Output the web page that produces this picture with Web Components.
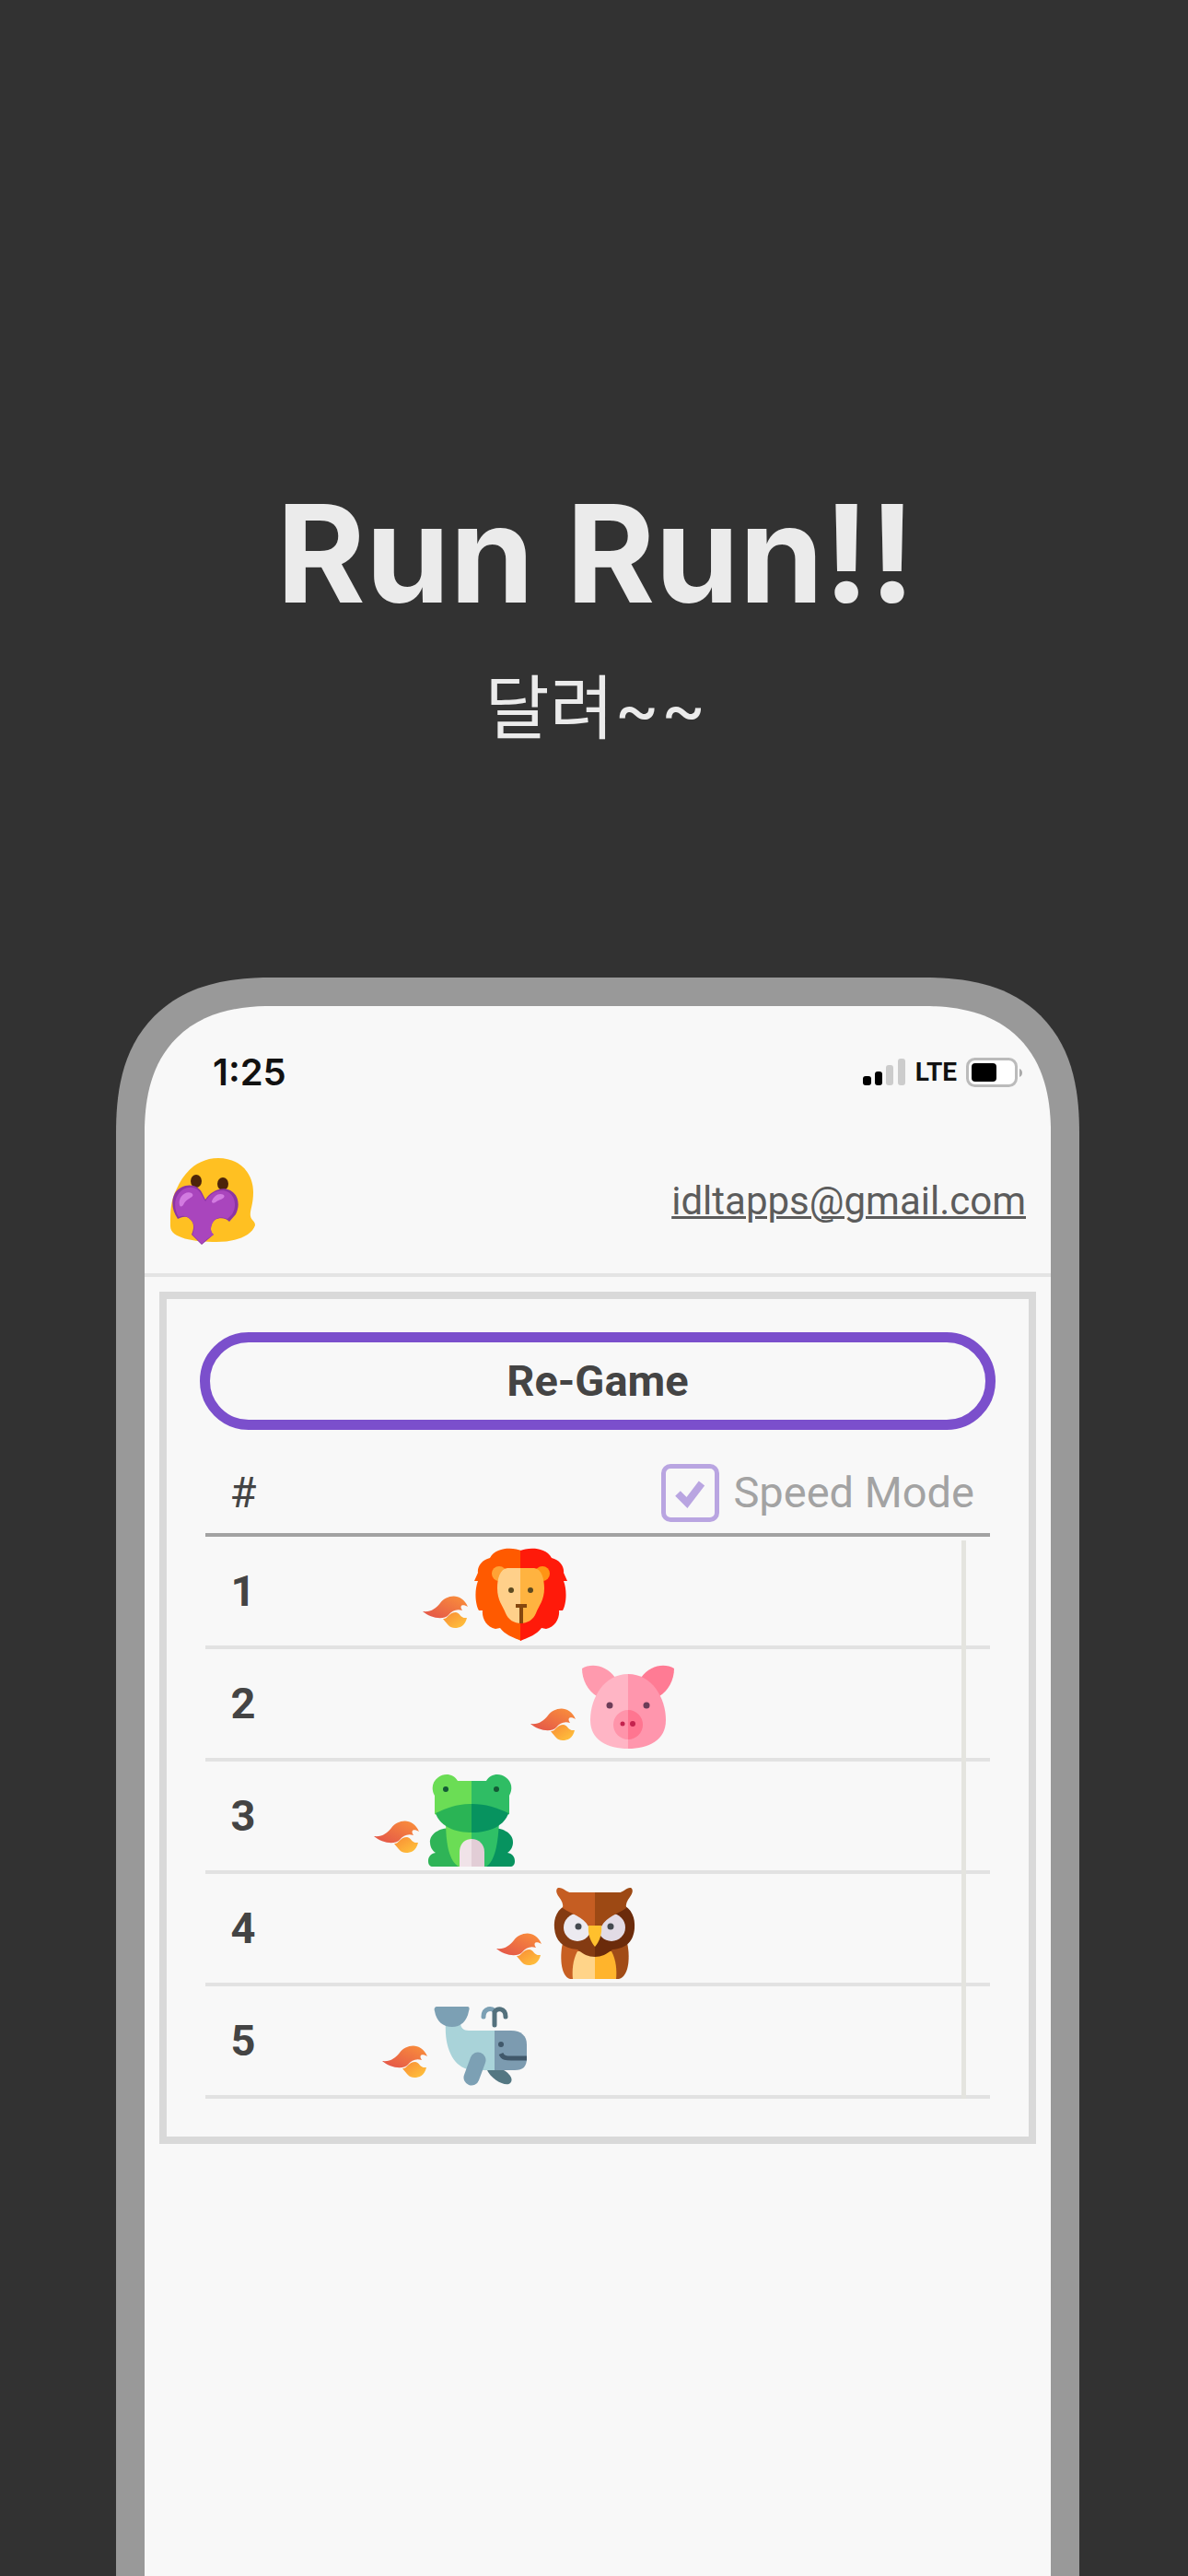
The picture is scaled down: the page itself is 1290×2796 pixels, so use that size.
<!DOCTYPE html>
<html lang="ko">
<head>
<meta charset="utf-8">
<meta name="viewport" content="width=device-width, initial-scale=1">
<title>Run Run!!</title>
<style>
  html { height: 100%; }
  body { margin: 0; min-height: 100%; display: flex; flex-direction: column; background: #323232; }
  promo-page { flex: 1; }
</style>
</head>
<body>
<promo-page>
  <promo-headline slot="headline">
    <span slot="title">Run Run!!</span>
    <span slot="subtitle">달려~~</span>
  </promo-headline>
  <phone-frame>
    <status-bar time="1:25" network="LTE"></status-bar>
    <app-header email="idltapps@gmail.com"></app-header>
    <race-board>
      <race-button slot="action">Re-Game</race-button>
    </race-board>
  </phone-frame>
</promo-page>

<script>
const define = (name, render) => customElements.define(name, class extends HTMLElement {
  constructor() {
    super();
    this.attachShadow({ mode: 'open' });
  }
  connectedCallback() {
    this.shadowRoot.innerHTML = render(this);
  }
});

const ANIMALS = {
  lion: `
    <g fill="#ff5a00"><path d="M51 2C44-1 24-3 17 10C8 12 3 20 4 26L0 35L4 35C0 45 1 60 5 67L9 67C8 75 13 85 23 87L28 86C34 94 44 97 51 100Z"/></g>
    <path fill="#ff1a0a" d="M50 2C57-1 77-3 84 10C93 12 98 20 97 26L101 35L97 35C101 45 100 60 96 67L92 67C93 75 88 85 78 87L73 86C67 94 57 97 50 100Z"/>
    <circle cx="27" cy="27" r="8" fill="#ffa335"/><circle cx="74" cy="27" r="8" fill="#ff9414"/>
    <path fill="#ffd08a" d="M51 21H36C28 22 25 32 25 43C25 56 31 62 34 70C37 77 43 81 51 81Z"/>
    <path fill="#ffb340" d="M50 21H65C73 22 76 32 76 43C76 56 70 62 67 70C64 77 58 81 50 81Z"/>
    <g fill="#5d4a20"><circle cx="40" cy="45" r="3"/><circle cx="61" cy="45" r="3"/></g>
    <path d="M45 62H57M51 63V81" fill="none" stroke="#85470f" stroke-width="4"/>`,
  pig: `
    <path fill="#ff9aae" d="M0 8C10 2 26 4 36 18L16 38C6 32 0 20 0 8Z"/>
    <path fill="#ff7b94" d="M100 8C90 2 74 4 64 18L84 38C94 32 100 20 100 8Z"/>
    <path fill="#ffb5c5" d="M50 14C24 14 9 40 9 64C9 86 28 95 50 95Z"/>
    <path fill="#ff96ad" d="M50 14C76 14 91 40 91 64C91 86 72 95 50 95Z"/>
    <path fill="#ff94aa" d="M50 53A16 16 0 0 0 50 85Z"/><path fill="#ff7590" d="M50 53A16 16 0 0 1 50 85Z"/>
    <g fill="#6c3d58"><circle cx="30" cy="48" r="3.5"/><circle cx="70" cy="48" r="3.5"/></g>
    <g fill="#c4234e"><circle cx="44" cy="68" r="2.5"/><circle cx="55" cy="68" r="3"/></g>`,
  frog: `
    <path fill="#2fb457" d="M30 60C16 57 4 66 5 75C5 80 8 84 11 86C5 87 3 91 3 95C3 99 5 101 8 101H38V70Z"/>
    <path fill="#07935f" d="M70 60C84 57 96 66 95 75C95 80 92 84 89 86C95 87 97 91 97 95C97 99 95 101 92 101H62V70Z"/>
    <path fill="#6bdd55" d="M50 50H22C22 78 26 95 36 101H50Z"/><path fill="#2fc066" d="M50 50H80C79 78 75 95 66 101H50Z"/>
    <path fill="#6bdd55" d="M50 8H35C31 0 20-1 14 4C7 9 6 17 10 24V44L50 60Z"/>
    <path fill="#2fbd64" d="M50 8H66C70 0 81-1 87 4C94 9 95 17 91 24V44L50 60Z"/>
    <path fill="#2ab455" d="M11 43C24 37 34 33 50 33V64C30 64 15 56 11 43Z"/>
    <path fill="#07935f" d="M90 43C77 37 66 33 50 33V64C71 64 86 56 90 43Z"/>
    <path fill="#f0e3e8" d="M50 71C42 71 37 77 37 85V101H50Z"/><path fill="#e2cdd6" d="M50 71C58 71 64 77 64 85V101H50Z"/>
    <g fill="#135a35"><circle cx="22" cy="17" r="3"/><circle cx="77" cy="17" r="3"/></g>`,
  owl: `
    <path fill="#c75f22" d="M51 62H16C13 74 13 98 24 101H51Z"/><path fill="#a14c17" d="M51 62H86C89 74 89 98 77 101H51Z"/>
    <path fill="#ffd489" d="M51 71H32C27 80 26 92 27 101H51Z"/><path fill="#ffb42c" d="M51 71H69C74 80 75 92 74 101H51Z"/>
    <path fill="#843b12" d="M51 20H22C10 24 6 35 7 46C8 59 16 68 32 69C38 74 44 77 51 77Z"/>
    <path fill="#6b2b0b" d="M51 20H80C91 24 95 35 94 46C93 59 86 68 70 69C64 74 58 77 51 77Z"/>
    <circle cx="32" cy="45" r="15" fill="#eceaf0"/><circle cx="69" cy="45" r="15" fill="#e2dbe5"/>
    <path fill="#c55d22" d="M51 7H25C20 7 16 1 11 2C8 4 9 8 12 12C15 16 17 20 16 24C26 31 38 33 44 44L51 45Z"/>
    <path fill="#9d4914" d="M51 7H77C82 7 86 1 90 2C93 4 92 8 89 12C86 16 84 20 85 24C75 31 64 33 58 44L51 45Z"/>
    <path fill="#ffc02d" d="M44 43H58C59 52 56 60 51 66C46 60 43 52 44 43Z"/>
    <g fill="#444a50"><circle cx="33" cy="44" r="3.5"/><circle cx="68" cy="44" r="3.5"/></g>`,
  whale: `
    <path fill="#547782" d="M57 76H72C80 79 88 87 83 92C79 96 63 90 57 76Z"/>
    <path fill="#a9d3d9" d="M13 26H29C29 32 32 35 38 35H68V78H44C24 78 11 58 13 26Z"/>
    <path fill="#7c9bb0" d="M66 35H84C95 35 101 41 101 50V65C101 74 97 78 88 78H66Z"/>
    <path fill="#7ca0b4" d="M4 9H36C39 9 39 11 38 14C36 25 29 31 20 31C10 31 3 25 1 14C0 11 1 9 4 9Z"/>
    <path fill="none" stroke="#7ca0b4" stroke-width="17" stroke-linecap="round" d="M48 67L41 86"/>
    <path fill="none" stroke="#7ca0b4" stroke-width="5" stroke-linecap="round" d="M54 20C54 10 64 10 66 14"/>
    <path fill="none" stroke="#54717d" stroke-width="5" stroke-linecap="round" d="M66 29V15C68 10 78 10 78 20"/>
    <circle cx="73" cy="50" r="3" fill="#40586a"/>
    <path fill="none" stroke="#40586a" stroke-width="5" d="M73 60C75 65 79 65 84 65H101"/>`
};

const RUNNERS = [
  { animal: 'lion', run: 200 },
  { animal: 'pig', run: 352 },
  { animal: 'frog', run: 131 },
  { animal: 'owl', run: 304 },
  { animal: 'whale', run: 143 }
];

define('promo-page', () => `
  <style>
    :host { display: flex; flex-direction: column; font-family: Roboto, "Noto Sans CJK KR", sans-serif; color: #444; }
    main { flex: 1; display: flex; flex-direction: column; padding: 0 118px 0 126px; }
  </style>
  <slot name="headline"></slot>
  <main><slot></slot></main>`);

define('promo-headline', () => `
  <style>
    :host { display: block; padding: 505px 118px 230px 122px; text-align: center; color: #ebebeb; }
    h1, p { margin: 0; }
    h1 { font: 700 147px/192px Inter, sans-serif; }
    p { padding-top: 9px; font: 400 76px/125px Inter, "Noto Sans CJK KR", sans-serif; }
  </style>
  <h1><slot name="title"></slot></h1>
  <p><slot name="subtitle"></slot></p>`);

define('phone-frame', () => `
  <style>
    :host { flex: 1; display: block; box-sizing: border-box; border: 31px solid #999; border-bottom: 0;
      border-radius: 150px 150px 0 0; background: #f8f8f8; }
    @supports (corner-shape: superellipse(1.3)) {
      :host { border-radius: 170px 170px 0 0; corner-shape: superellipse(1.3); }
    }
  </style>
  <slot></slot>`);

define('status-bar', el => `
  <style>
    :host { display: flex; justify-content: space-between; align-items: center; height: 144px; padding: 0 30px 0 74px; color: #111; }
    .time { font: 600 40px/48px Inter, sans-serif; }
    .status { display: flex; align-items: center; gap: 10px; font: 700 28px/48px "Liberation Sans Narrow", Roboto, sans-serif; }
    svg { display: block; }
  </style>
  <span class="time">${el.getAttribute('time')}</span>
  <div class="status">
    <svg width="47" height="30" viewBox="0 0 47 30" aria-hidden="true">
      <rect x="0" y="19" width="9" height="10" rx="3" fill="#000"/><rect x="13" y="14" width="8" height="15" rx="3" fill="#000"/>
      <rect x="25" y="7" width="8" height="22" rx="3" fill="#ccc"/><rect x="38" y="0" width="8" height="29" rx="3" fill="#ccc"/>
    </svg>
    <span>${el.getAttribute('network')}</span>
    <svg width="62" height="32" viewBox="0 0 62 32" aria-hidden="true">
      <rect x="1.5" y="1.5" width="53" height="29" rx="8" fill="#fff" stroke="#bbb" stroke-width="3"/>
      <rect x="6" y="6" width="27" height="20" rx="4" fill="#000"/>
      <path d="M58 12C62 13 62 20 58 21Z" fill="#aaa"/>
    </svg>
  </div>`);

define('app-header', el => `
  <style>
    :host { display: block; }
    header { box-sizing: border-box; display: flex; justify-content: space-between; align-items: center; height: 150px; padding: 0 27px 10px 26px; border-bottom: 4px solid #e4e4e4; }
    svg { display: block; }
    a { font-size: 42px; line-height: 48px; color: #5c5c5c; text-decoration: underline; text-decoration-thickness: 3px; }
  </style>
  <header>
    <svg width="94" height="94" viewBox="0 0 94 94" role="img" aria-label="Logo">
      <path fill="#ffc022" d="M54 0C78 0 92 17 92 37C92 51 88 57 89 63C90 68 94 68 94 73C90 85 72 91 52 91C28 91 2 87 2 74C2 58 2 46 9 33C17 15 32 0 54 0Z"/>
      <ellipse cx="30" cy="25" rx="6" ry="7" fill="#4d2409"/><ellipse cx="59" cy="28" rx="6" ry="7" fill="#4d2409"/>
      <path fill="#8d35a3" d="M10 66C3 56 3 45 7 38C14 27 32 26 37 39L40 45C46 36 57 30 67 35C76 40 78 51 73 61L66 69C62 64 50 63 47 72C45 77 46 80 49 83L43 88L36 94L30 88L25 83C28 76 28 70 23 66C19 62 14 64 10 66Z"/>
      <path fill="#a945bd" d="M11 64C6 56 6 46 10 40C17 29 31 29 36 40L40 47C47 35 58 33 65 37C73 42 74 53 69 61L64 66C57 63 50 64 47 72C45 77 46 80 49 83L43 87L36 93L31 88L26 83C29 76 28 70 23 66C19 62 15 62 11 64Z"/>
      <path fill="#d27be0" d="M12 51C10 43 18 35 25 38C30 42 21 43 17 49C16 52 13 54 12 51ZM47 47C49 41 55 37 60 40C63 44 54 45 51 48C49 49 47 49 47 47Z"/>
    </svg>
    <a href="mailto:${el.getAttribute('email')}">${el.getAttribute('email')}</a>
  </header>`);

define('race-button', () => `
  <style>
    :host { display: block; }
    button { display: block; box-sizing: border-box; width: 100%; height: 106px; border: 11px solid #7b4fcc; border-radius: 53px;
      background: transparent; color: #444; font: 700 47px/56px Roboto, sans-serif; padding: 0; }
  </style>
  <button type="button"><slot></slot></button>`);

define('race-runner', el => `
  <style>
    :host { display: flex; align-items: flex-end; gap: 6px; }
    svg { display: block; overflow: visible; }
    .flame { margin-bottom: 13px; }
  </style>
  <svg class="flame" width="50" height="36" viewBox="0 0 50 36" aria-hidden="true">
    <defs>
      <linearGradient id="hot" x1="0" y1="1" x2="1" y2="0"><stop offset="0" stop-color="#e2524a"/><stop offset="1" stop-color="#fb923a"/></linearGradient>
      <linearGradient id="warm" x1="0" y1="0" x2="1" y2="1"><stop offset="0" stop-color="#f98b35"/><stop offset="1" stop-color="#ffc73d"/></linearGradient>
    </defs>
    <path fill="url(#warm)" d="M22 25C27 26 28 18 36 18C41 19 41 25 48 24C46 33 40 35 35 35C29 35 27 31 22 25Z"/>
    <path fill="url(#hot)" d="M0 17C9 18 14 14 19 8C26-1 42-4 49 12C44 9 39 10 43 16C37 14 32 16 28 21C22 27 8 24 0 17Z"/>
  </svg>
  <svg width="100" height="100" viewBox="0 0 100 100" role="img" aria-label="${el.getAttribute('animal')}">${ANIMALS[el.getAttribute('animal')]}</svg>`);

define('race-board', () => `
  <style>
    :host { display: block; margin: 16px 16px 0; box-sizing: border-box; border: 8px solid #d9d9d9; padding: 36px 36px 41px; font-size: 47px; line-height: 56px; color: #444; }
    .course { position: relative; margin: 0 6px; }
    table { width: 100%; border-collapse: separate; border-spacing: 0; table-layout: fixed; }
    th, td { box-sizing: border-box; padding: 0; height: 122px; border-bottom: 4px solid #e2e2e2; vertical-align: middle; }
    td { padding-top: 8px; }
    th:first-child { width: 82px; text-align: center; }
    thead th { height: 116px; padding-top: 24px; border-bottom-color: #a2a2a2; font-weight: 400; }
    label { display: flex; align-items: center; justify-content: flex-end; gap: 15px; padding-right: 17px; color: #a3a3a3; }
    .box { display: grid; }
    .box > * { grid-area: 1 / 1; }
    input { appearance: none; box-sizing: border-box; margin: 0; width: 63px; height: 63px; border: 5px solid #b9a5e1; border-radius: 10px; }
    svg { display: block; pointer-events: none; }
    race-runner { margin-left: calc(var(--run) * 0.1%); }
    .finish { position: absolute; top: 120px; right: 26px; bottom: 0; width: 5px; background: #e4e4df; }
  </style>
  <slot name="action"></slot>
  <div class="course">
    <table>
      <thead>
        <tr>
          <th scope="col">#</th>
          <th scope="col">
            <label for="speed">
              <span class="box">
                <input id="speed" type="checkbox" checked disabled>
                <svg width="63" height="63" viewBox="0 0 63 63" aria-hidden="true"><path d="M18 32L28 42L44 21" fill="none" stroke="#b9a5e1" stroke-width="8"/></svg>
              </span>
              Speed Mode
            </label>
          </th>
        </tr>
      </thead>
      <tbody>
        ${RUNNERS.map(({ animal, run }, i) => `
        <tr><th scope="row">${i + 1}</th><td><race-runner animal="${animal}" style="--run:${run}"></race-runner></td></tr>`).join('')}
      </tbody>
    </table>
    <div class="finish"></div>
  </div>`);
</script>
</body>
</html>
